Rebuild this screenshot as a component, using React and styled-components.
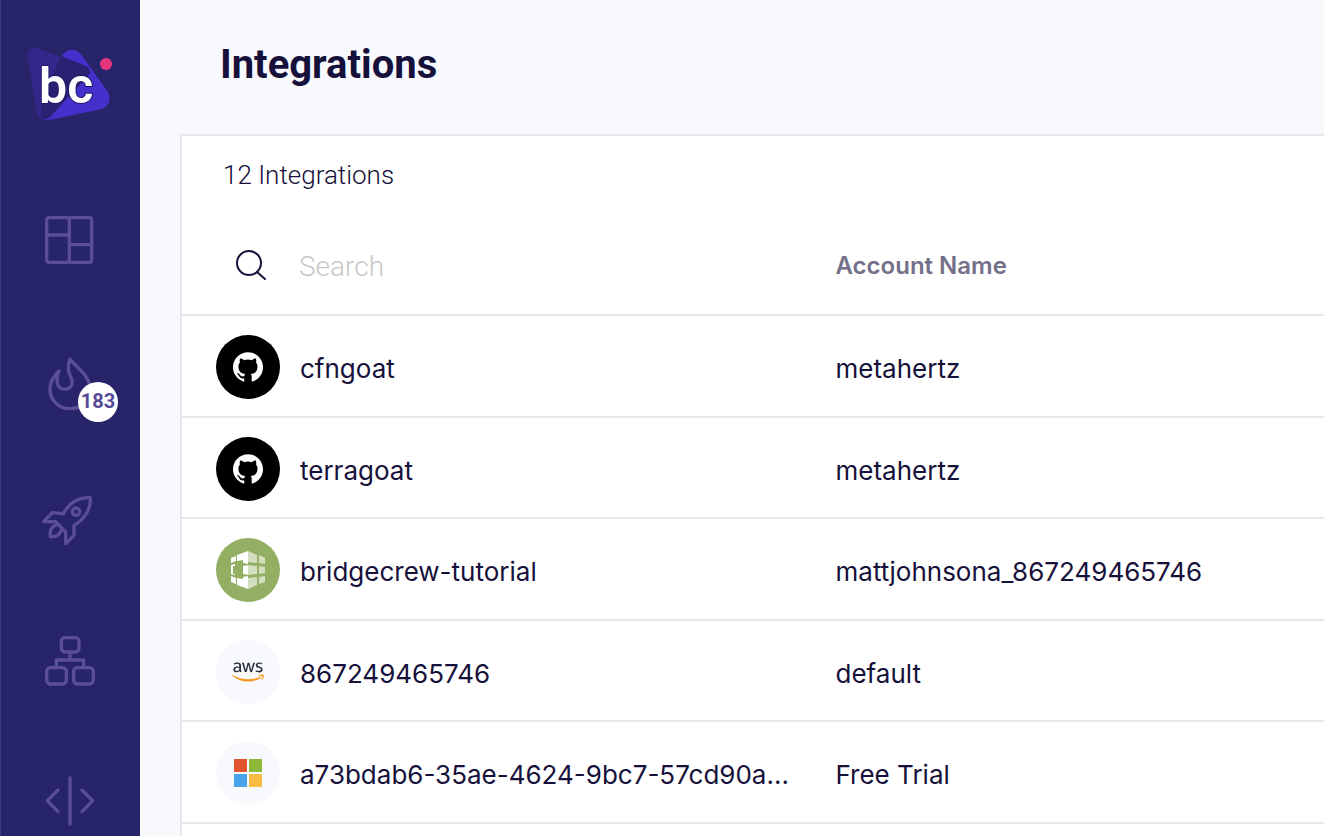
import React from "react";
import styled, { createGlobalStyle } from "styled-components";
import { FaAws } from "react-icons/fa";
import { SiGithub } from "react-icons/si";

const colors = {
  nav: "#28246a",
  navEdge: "#403b7d",
  navIcon: "#5b4d97",
  page: "#f8f9fd",
  panel: "#ffffff",
  line: "#e7e7ee",
  ink: "#16113a",
  muted: "#757089",
  placeholder: "#c8c8c8",
};

const GlobalStyle = createGlobalStyle`
  *, *::before, *::after { box-sizing: border-box; }
  body {
    margin: 0;
    background: ${colors.page};
    color: ${colors.ink};
    font-family: Inter, "Liberation Sans", sans-serif;
  }
`;

const Shell = styled.div`
  display: flex;
  height: 100vh;
  overflow: hidden;
`;

const Sidebar = styled.nav`
  display: flex;
  flex-direction: column;
  flex: 0 0 140px;
  overflow: hidden;
  background: ${colors.nav};
  box-shadow: inset 1px 0 0 ${colors.navEdge};
`;

const Brand = styled.a`
  display: flex;
  align-items: center;
  justify-content: center;
  flex: 0 0 170px;
`;

const NavItem = styled.a`
  position: relative;
  display: flex;
  align-items: center;
  justify-content: center;
  flex: 0 0 140px;
  color: ${colors.navIcon};
  text-decoration: none;
`;

const NavIcon = styled.svg`
  width: 56px;
  height: 56px;
  overflow: visible;
  fill: none;
  stroke: currentColor;
  stroke-width: 10;
  stroke-linecap: round;
  stroke-linejoin: round;
`;

const Badge = styled.span`
  position: absolute;
  top: 72px;
  right: 22px;
  width: 40px;
  height: 40px;
  border-radius: 50%;
  background: #ffffff;
  color: #574b98;
  font: 700 20px/38px Roboto, sans-serif;
  text-align: center;
`;

const Main = styled.main`
  display: flex;
  flex-direction: column;
  flex: 1;
  min-width: 0;
  overflow: hidden;
  padding: 41px 0 0 40px;
`;

const Title = styled.h1`
  margin: 0 0 45px 40px;
  font: 700 40px/48px Roboto, sans-serif;
`;

const Panel = styled.section`
  flex: 1 0 auto;
  background: ${colors.panel};
  border-top: 2px solid ${colors.line};
  border-left: 2px solid ${colors.line};
`;

const Count = styled.p`
  margin: 0;
  padding: 23px 41px 25px;
  font: 300 26px/32px Roboto, sans-serif;
`;

const Table = styled.table`
  width: 100%;
  table-layout: fixed;
  border-collapse: separate;
  border-spacing: 0;
`;

const HeadCell = styled.th`
  width: ${(p) => p.$width};
  height: 100px;
  padding: 2px 0 0 ${(p) => p.$inset};
  border-bottom: 2px solid ${colors.line};
  color: ${colors.muted};
  font-size: 24px;
  font-weight: 600;
  line-height: 32px;
  text-align: left;
`;

const Row = styled.tr`
  height: 101px;

  &:nth-child(odd) {
    height: 102px;
  }
`;

const Cell = styled.td`
  padding: 19px 0 0 ${(p) => p.$inset};
  border-bottom: 2px solid ${colors.line};
  vertical-align: top;
`;

const CellText = styled.div`
  padding-top: 2px;
  font-size: 26px;
  line-height: 64px;
  white-space: nowrap;
`;

const SearchField = styled.label`
  display: flex;
  align-items: center;
  gap: 31px;
  padding-left: 18px;
`;

const SearchIcon = styled.svg`
  flex: none;
  width: 34px;
  height: 34px;
  fill: none;
  stroke: ${colors.ink};
  stroke-width: 2;
  stroke-linecap: round;
`;

const SearchInput = styled.input`
  flex: 1;
  min-width: 0;
  padding: 2px 0 0;
  border: 0;
  outline: 0;
  background: transparent;
  color: ${colors.ink};
  font: 300 28px/36px Roboto, sans-serif;

  &::placeholder {
    color: ${colors.placeholder};
    opacity: 1;
  }
`;

const Integration = styled.div`
  display: flex;
  align-items: flex-start;
  gap: 20px;
`;

const Avatar = styled.span`
  display: flex;
  align-items: center;
  justify-content: center;
  flex: none;
  width: 64px;
  height: 64px;
  border-radius: 50%;
  background: ${(p) => p.$tone};
  color: #ffffff;
`;

function Logo() {
  return (
    <svg width="88" height="80" viewBox="26 45 88 80" role="img" aria-label="bc">
      <path d="M36 48 L86 66 Q94 70 88 76 L50 117 Q40 124 37 113 L28 58 Q27 46 36 48Z" fill="#33278c" />
      <path d="M63 54 Q71 46 80 53 L108 92 Q113 104 102 109 L54 119 Q44 121 42 119 Z" fill="#4431cb" />
      <path d="M61 56 L86 66 Q93 70 88 76 L50 117 Q46 121 41 119 L42 98 Z" fill="#2b2172" />
      <text
        x="39"
        y="103"
        fill="#ffffff"
        stroke="#1d1668"
        strokeWidth="2"
        strokeLinejoin="round"
        paintOrder="stroke"
        fontFamily="Roboto, sans-serif"
        fontWeight="600"
        fontSize="50"
      >
        bc
      </text>
      <circle cx="106" cy="64" r="6" fill="#e5347f" />
    </svg>
  );
}

function DashboardIcon() {
  return (
    <NavIcon viewBox="66 66 168 168" aria-hidden="true">
      <rect x="80" y="83" width="135" height="134" rx="7" />
      <path d="M148 83V217M80 135H148M148 164H215" />
    </NavIcon>
  );
}

function FlameIcon() {
  return (
    <NavIcon viewBox="66 486 168 168" aria-hidden="true">
      <path d="M150 507C165 530 211 555 211 600C211 634 184 656 150 656C117 656 90 632 90 598C90 572 103 556 117 543C113 555 110 562 111 574C112 590 122 598 134 598C148 598 158 588 156 573C154 556 136 545 150 507Z" />
    </NavIcon>
  );
}

function RocketIcon() {
  return (
    <NavIcon viewBox="66 36 168 168" aria-hidden="true">
      <path d="M130 101C148 68 176 51 211 53C213 86 195 117 162 136V166L137 191V156L107 125H71L97 98Z" />
      <circle cx="168" cy="95" r="11" />
      <path d="M110 134C94 140 88 153 91 170C108 172 120 164 125 148" />
    </NavIcon>
  );
}

function NetworkIcon() {
  return (
    <NavIcon viewBox="66 456 168 168" aria-hidden="true">
      <rect x="124" y="473" width="53" height="43" rx="11" />
      <rect x="80" y="563" width="59" height="49" rx="11" />
      <rect x="161" y="563" width="59" height="49" rx="11" />
      <path d="M150 516V540M109 562V540H191V562" />
    </NavIcon>
  );
}

function CodeIcon() {
  return (
    <NavIcon viewBox="126 96 168 168" aria-hidden="true">
      <path d="M210 113V252M174 150L142 182L174 215M246 150L278 182L246 215" />
    </NavIcon>
  );
}

function CodeBuildMark() {
  return (
    <svg width="64" height="64" viewBox="0 0 64 64" aria-hidden="true">
      <g fill="#ffffff">
        <path d="M15 20L20 18V23L15 25Z" />
        <path d="M21 17L32 13V26L27 25V22L21 23Z" />
        <path d="M15 27L19 26V28H17V36H19V37L15 36Z" />
        <path d="M27 28L32 27V37L27 36Z" />
        <path d="M15 38L20 40V46L15 44Z" />
        <path d="M21 40L27 41V39L32 38V51L21 47Z" />
      </g>
      <g fill="#d3dfbf">
        <path d="M32 13L41 17V25L32 24Z" />
        <path d="M43 17L49 20V26L43 25Z" />
        <path d="M32 27L41 28V36L32 37Z" />
        <path d="M43 28L49 29V35L43 36Z" />
        <path d="M32 40L41 39V47L32 51Z" />
        <path d="M43 39L49 38V44L43 46Z" />
      </g>
    </svg>
  );
}

function AwsMark() {
  return (
    <>
      <svg width="0" height="0" aria-hidden="true">
        <linearGradient id="aws-tones" gradientUnits="userSpaceOnUse" x1="0" y1="0" x2="0" y2="512">
          <stop offset="0.58" stopColor="#252f3e" />
          <stop offset="0.58" stopColor="#f7981f" />
        </linearGradient>
      </svg>
      <FaAws size={32} fill="url(#aws-tones)" />
    </>
  );
}

function MicrosoftMark() {
  return (
    <svg width="28" height="28" viewBox="0 0 28 28" aria-hidden="true">
      <rect width="13" height="13" fill="#e0552f" />
      <rect x="15" width="13" height="13" fill="#8db838" />
      <rect y="15" width="13" height="13" fill="#47a3ea" />
      <rect x="15" y="15" width="13" height="13" fill="#f6bb42" />
    </svg>
  );
}

const providers = {
  github: { tone: "#000000", mark: <SiGithub size={30} /> },
  codebuild: { tone: "#93af64", mark: <CodeBuildMark /> },
  aws: { tone: "#f8f9fd", mark: <AwsMark /> },
  azure: { tone: "#f8f9fd", mark: <MicrosoftMark /> },
};

const integrations = [
  { provider: "github", name: "cfngoat", account: "metahertz" },
  { provider: "github", name: "terragoat", account: "metahertz" },
  { provider: "codebuild", name: "bridgecrew-tutorial", account: "mattjohnsona_867249465746" },
  { provider: "aws", name: "867249465746", account: "default" },
  { provider: "azure", name: "a73bdab6-35ae-4624-9bc7-57cd90a...", account: "Free Trial" },
];

const navItems = [
  { label: "Dashboard", icon: <DashboardIcon /> },
  { label: "Incidents", icon: <FlameIcon />, badge: 183 },
  { label: "Releases", icon: <RocketIcon /> },
  { label: "Resources", icon: <NetworkIcon /> },
  { label: "Code", icon: <CodeIcon /> },
];

export default function App() {
  return (
    <>
      <GlobalStyle />
      <Shell>
        <Sidebar aria-label="Main">
          <Brand href="#home">
            <Logo />
          </Brand>
          {navItems.map((item) => (
            <NavItem key={item.label} href={`#${item.label.toLowerCase()}`} aria-label={item.label}>
              {item.icon}
              {item.badge && <Badge>{item.badge}</Badge>}
            </NavItem>
          ))}
        </Sidebar>
        <Main>
          <Title>Integrations</Title>
          <Panel>
            <Count>12 Integrations</Count>
            <Table>
              <thead>
                <tr>
                  <HeadCell scope="col" $width="56%" $inset="34px">
                    <SearchField>
                      <SearchIcon viewBox="0 0 34 34" aria-hidden="true">
                        <circle cx="15" cy="14" r="12" />
                        <path d="M23 23L31 30" />
                      </SearchIcon>
                      <SearchInput type="text" placeholder="Search" aria-label="Search" />
                    </SearchField>
                  </HeadCell>
                  <HeadCell scope="col" $width="44%" $inset="14px">
                    Account Name
                  </HeadCell>
                </tr>
              </thead>
              <tbody>
                {integrations.map((row) => (
                  <Row key={row.name}>
                    <Cell $inset="34px">
                      <Integration>
                        <Avatar $tone={providers[row.provider].tone}>{providers[row.provider].mark}</Avatar>
                        <CellText>{row.name}</CellText>
                      </Integration>
                    </Cell>
                    <Cell $inset="14px">
                      <CellText>{row.account}</CellText>
                    </Cell>
                  </Row>
                ))}
              </tbody>
            </Table>
          </Panel>
        </Main>
      </Shell>
    </>
  );
}
